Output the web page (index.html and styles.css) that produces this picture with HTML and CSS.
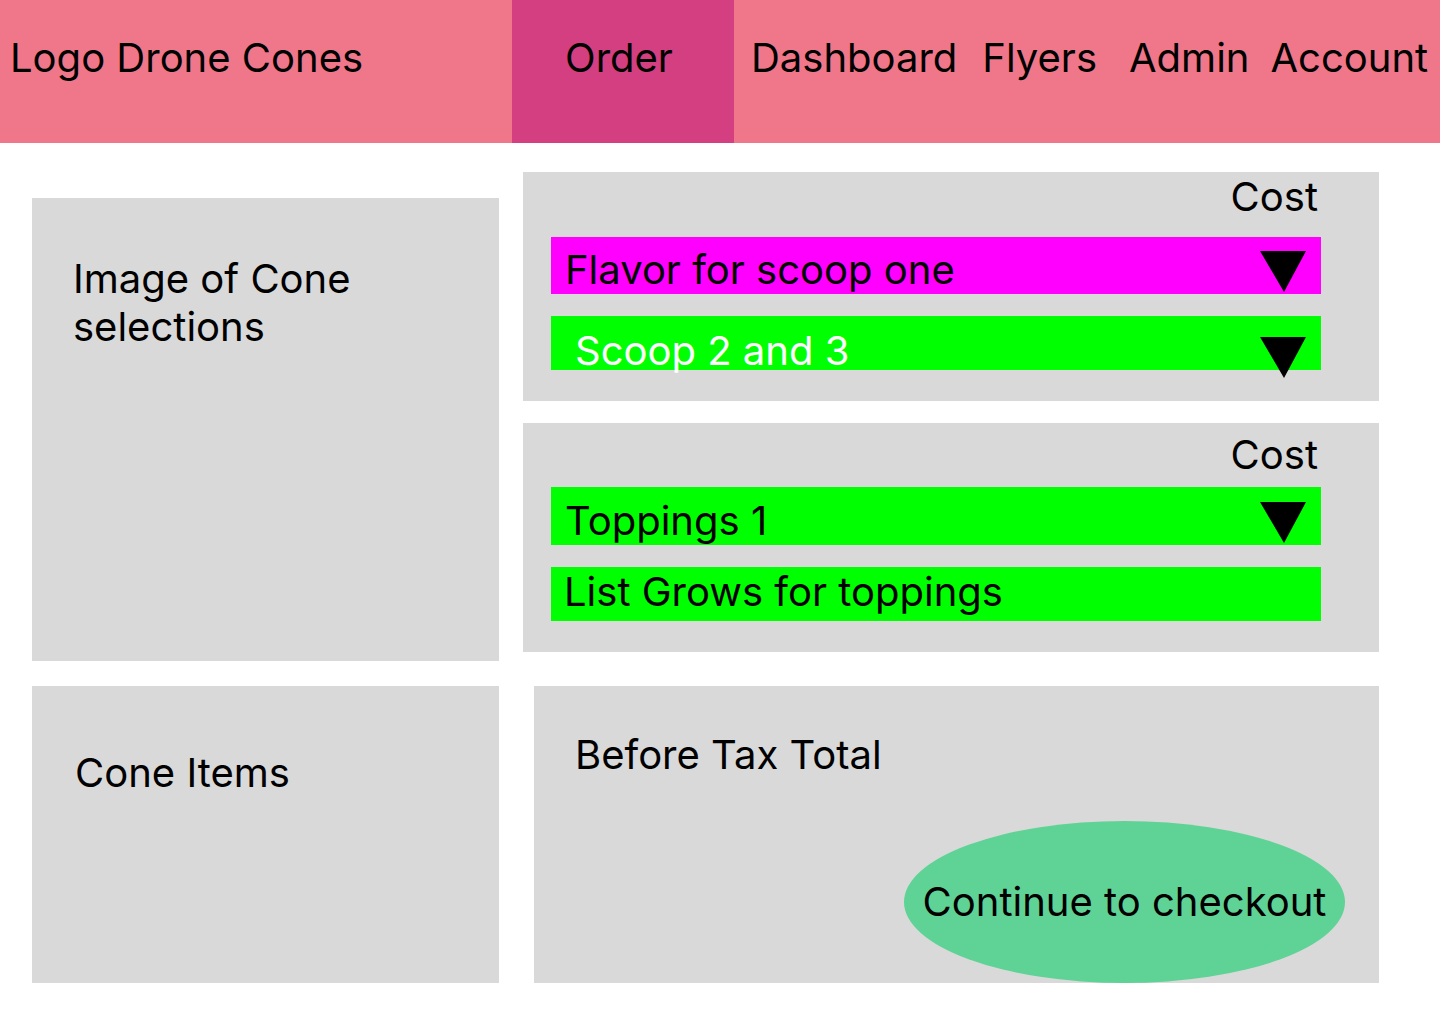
FILE: index.html
```html
<!DOCTYPE html>
<html lang="en">
<head>
<meta charset="utf-8">
<title>Drone Cones - Order</title>
<link rel="stylesheet" href="styles.css">
</head>
<body>
<header class="topbar">
  <div class="brand">Logo Drone Cones</div>
  <div class="nav-item nav-order">Order</div>
  <div class="nav-item nav-dashboard">Dashboard</div>
  <div class="nav-item nav-flyers">Flyers</div>
  <div class="nav-item nav-admin">Admin</div>
  <div class="nav-item nav-account">Account</div>
</header>

<main class="main">
  <section class="row row-top">
    <div class="panel panel-image">
      <p class="panel-image-text">Image of Cone selections</p>
    </div>
    <div class="options">
      <div class="panel option-panel option-panel-scoops">
        <div class="cost">Cost</div>
        <div class="bar bar-magenta bar-flavor">
          <span class="bar-label">Flavor for scoop one</span>
          <svg class="tri" width="46" height="41" viewBox="0 0 46 41"><polygon points="0,0 46,0 24,41" fill="#000"/></svg>
        </div>
        <div class="bar bar-green bar-scoop">
          <span class="bar-label bar-label-white">Scoop 2 and 3</span>
          <svg class="tri" width="46" height="41" viewBox="0 0 46 41"><polygon points="0,0 46,0 24,41" fill="#000"/></svg>
        </div>
      </div>
      <div class="panel option-panel option-panel-toppings">
        <div class="cost">Cost</div>
        <div class="bar bar-green bar-toppings">
          <span class="bar-label">Toppings 1</span>
          <svg class="tri" width="46" height="41" viewBox="0 0 46 41"><polygon points="0,0 46,0 24,41" fill="#000"/></svg>
        </div>
        <div class="bar bar-green bar-list">
          <span class="bar-label">List Grows for toppings</span>
        </div>
      </div>
    </div>
  </section>

  <section class="row row-bottom">
    <div class="panel panel-items">
      <p class="panel-items-text">Cone Items</p>
    </div>
    <div class="panel panel-total">
      <p class="total-text">Before Tax Total</p>
      <button class="checkout" type="button">Continue to checkout</button>
    </div>
  </section>
</main>
</body>
</html>
```

FILE: styles.css
```css
* {
  box-sizing: border-box;
}

html, body {
  margin: 0;
  padding: 0;
  background: #ffffff;
}

body {
  width: 1440px;
  height: 1024px;
  overflow: hidden;
  font-family: "Inter", "Noto Sans", "Liberation Sans", sans-serif;
  font-size: 40px;
  line-height: 48px;
  color: #000000;
}

p {
  margin: 0;
}

/* Header */
.topbar {
  display: flex;
  height: 143px;
  background: #f07789;
}

.brand {
  width: 512px;
  padding: 34px 0 0 10px;
  white-space: nowrap;
}

.nav-item {
  padding-top: 34px;
  white-space: nowrap;
}

.nav-order {
  width: 222px;
  background: #d33f80;
  text-align: center;
  padding-right: 8px;
}

.nav-dashboard {
  margin-left: 17px;
}

.nav-flyers {
  margin-left: 25px;
}

.nav-admin {
  margin-left: 32px;
}

.nav-account {
  margin-left: 21px;
}

/* Main */
.main {
  display: flex;
  flex-direction: column;
  gap: 25px;
  padding: 29px 0 0 32px;
}

.row {
  display: flex;
  align-items: flex-start;
}

.panel {
  background: #d9d9d9;
}

.panel-image {
  width: 467px;
  height: 463px;
  margin-top: 26px;
  padding: 57px 0 0 41px;
}

.panel-image-text {
  max-width: 340px;
}

.options {
  width: 856px;
  margin-left: 24px;
  display: flex;
  flex-direction: column;
  gap: 22px;
}

.option-panel {
  height: 229px;
  padding-left: 28px;
  display: flex;
  flex-direction: column;
  align-items: flex-start;
}

.option-panel-scoops {
  padding-top: 1px;
}

.option-panel-toppings {
  padding-top: 8px;
}

.cost {
  align-self: stretch;
  text-align: right;
  padding-right: 61px;
}

.bar {
  width: 770px;
  display: flex;
  justify-content: space-between;
  align-items: flex-start;
  padding-right: 15px;
  overflow: visible;
  white-space: nowrap;
}

.bar-magenta {
  background: #ff00ff;
}

.bar-green {
  background: #00ff00;
}

.bar-label-white {
  color: #ffffff;
}

.tri {
  display: block;
  flex: none;
}

.bar-flavor {
  height: 57px;
  margin-top: 16px;
  padding-left: 14px;
}

.bar-flavor .bar-label {
  padding-top: 9px;
}

.bar-flavor .tri {
  margin-top: 14px;
}

.bar-scoop {
  height: 54px;
  margin-top: 22px;
  padding-left: 24px;
}

.bar-scoop .bar-label {
  padding-top: 11px;
}

.bar-scoop .tri {
  margin-top: 21px;
}

.bar-toppings {
  height: 58px;
  margin-top: 8px;
  padding-left: 14px;
}

.bar-toppings .bar-label {
  padding-top: 10px;
}

.bar-toppings .tri {
  margin-top: 15px;
}

.bar-list {
  height: 54px;
  margin-top: 22px;
  padding-left: 13px;
}

.bar-list .bar-label {
  padding-top: 1px;
}

.panel-items {
  width: 467px;
  height: 297px;
  padding: 63px 0 0 43px;
}

.panel-total {
  width: 845px;
  height: 297px;
  margin-left: 35px;
  padding: 45px 34px 0 41px;
  display: flex;
  flex-direction: column;
  align-items: flex-start;
}

.checkout {
  margin-top: auto;
  align-self: flex-end;
  width: 441px;
  height: 162px;
  border: none;
  border-radius: 50%;
  background: #5fd395;
  font: inherit;
  color: #000000;
  padding: 0;
  display: flex;
  align-items: center;
  justify-content: center;
  white-space: nowrap;
}
```
